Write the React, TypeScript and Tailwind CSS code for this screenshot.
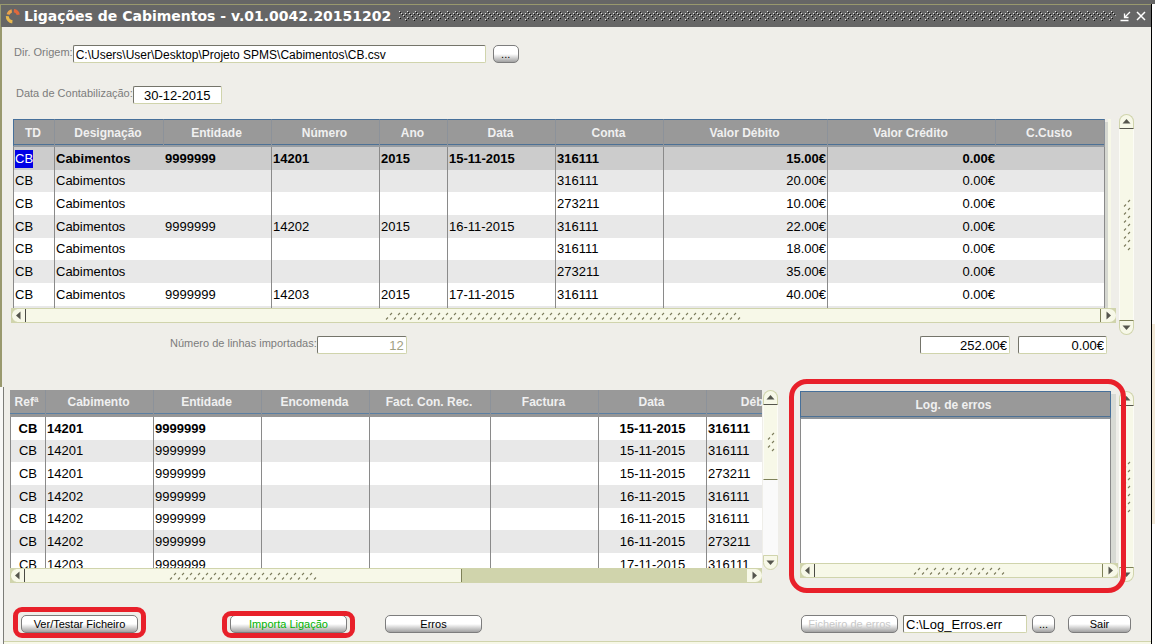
import React, { useId } from "react";
import clsx from "clsx";

type Align = "left" | "center" | "right";
interface Column {
  title: string;
  width: string;
  align: Align;
  line: boolean;
}

const alignClass: Record<Align, string> = {
  left: "text-left",
  center: "text-center",
  right: "text-right",
};

const mainColumns: Column[] = [
  { title: "TD", width: "w-[42px]", align: "left", line: true },
  { title: "Designação", width: "w-[109px]", align: "left", line: false },
  { title: "Entidade", width: "w-[108px]", align: "left", line: true },
  { title: "Número", width: "w-[108px]", align: "left", line: true },
  { title: "Ano", width: "w-[68px]", align: "left", line: true },
  { title: "Data", width: "w-[108px]", align: "left", line: true },
  { title: "Conta", width: "w-[108px]", align: "left", line: true },
  { title: "Valor Débito", width: "w-[164px]", align: "right", line: true },
  { title: "Valor Crédito", width: "w-[168px]", align: "right", line: false },
  { title: "C.Custo", width: "w-auto", align: "left", line: true },
];

const mainRows: string[][] = [
  ["CB", "Cabimentos", "9999999", "14201", "2015", "15-11-2015", "316111", "15.00€", "0.00€", ""],
  ["CB", "Cabimentos", "", "", "", "", "316111", "20.00€", "0.00€", ""],
  ["CB", "Cabimentos", "", "", "", "", "273211", "10.00€", "0.00€", ""],
  ["CB", "Cabimentos", "9999999", "14202", "2015", "16-11-2015", "316111", "22.00€", "0.00€", ""],
  ["CB", "Cabimentos", "", "", "", "", "316111", "18.00€", "0.00€", ""],
  ["CB", "Cabimentos", "", "", "", "", "273211", "35.00€", "0.00€", ""],
  ["CB", "Cabimentos", "9999999", "14203", "2015", "17-11-2015", "316111", "40.00€", "0.00€", ""],
  ["", "", "", "", "", "", "", "", "", ""],
];

const linkColumns: Column[] = [
  { title: "Refª", width: "w-[36px]", align: "center", line: true },
  { title: "Cabimento", width: "w-[108px]", align: "left", line: true },
  { title: "Entidade", width: "w-[108px]", align: "left", line: true },
  { title: "Encomenda", width: "w-[108px]", align: "left", line: true },
  { title: "Fact. Con. Rec.", width: "w-[121px]", align: "left", line: true },
  { title: "Factura", width: "w-[108px]", align: "left", line: true },
  { title: "Data", width: "w-[108px]", align: "center", line: true },
  { title: "Débito", width: "w-[108px]", align: "left", line: true },
];

const linkRows: string[][] = [
  ["CB", "14201", "9999999", "", "", "", "15-11-2015", "316111"],
  ["CB", "14201", "9999999", "", "", "", "15-11-2015", "316111"],
  ["CB", "14201", "9999999", "", "", "", "15-11-2015", "273211"],
  ["CB", "14202", "9999999", "", "", "", "16-11-2015", "316111"],
  ["CB", "14202", "9999999", "", "", "", "16-11-2015", "316111"],
  ["CB", "14202", "9999999", "", "", "", "16-11-2015", "273211"],
  ["CB", "14203", "9999999", "", "", "", "17-11-2015", "316111"],
];

function DataGrid({
  columns,
  rows,
  framed,
  className,
}: {
  columns: Column[];
  rows: string[][];
  framed: boolean;
  className: string;
}) {
  return (
    <table className={clsx("table-fixed border-separate border-spacing-0", className)}>
      <thead>
        <tr>
          {columns.map((c, i) => (
            <th
              key={c.title}
              scope="col"
              className={clsx(
                "border-r border-r-[#8c929a] bg-[#999999] py-0 pr-[2px] pl-0 text-center text-[12px] font-bold text-[#f0f0f0]",
                framed
                  ? "h-[28px] border-t border-b-2 border-t-[#47709a] border-b-[#969ca2] shadow-[inset_0_-1px_0_#4d7195]"
                  : "h-[27px] border-b-[3px] border-b-[#969696] shadow-[inset_0_-1px_0_#5a7fa3]",
                framed && i === 0 && "border-l border-l-[#47709a]",
                c.width,
              )}
            >
              {c.title}
            </th>
          ))}
        </tr>
      </thead>
      <tbody>
        {rows.map((row, r) => (
          <tr
            key={r}
            className={clsx(
              r % 3 === 1 ? "h-[22px]" : "h-[23px]",
              r % 2 === 1 ? "bg-[#e8e8e8]" : framed && r === 0 ? "bg-[#cccccc]" : "bg-white",
            )}
          >
            {row.map((value, c) => (
              <td
                key={c}
                className={clsx(
                  "overflow-hidden px-px py-0 text-[13px] leading-[18px] whitespace-nowrap",
                  columns[c].line && "border-r border-r-[#8a8a8a]",
                  c === 0 && "border-l border-l-[#8a8a8a]",
                  r === 0 && c > 0 && "font-bold",
                  r === 0 && c === 0 && !framed && "font-bold",
                  alignClass[columns[c].align],
                )}
              >
                {framed && r === 0 && c === 0 ? (
                  <span className="inline-block bg-[#0000e6] text-white">{value}</span>
                ) : (
                  value
                )}
              </td>
            ))}
          </tr>
        ))}
      </tbody>
    </table>
  );
}

/* Short diagonal marks drawn on the scroll bar thumbs. */
function Grip({ className }: { className: string }) {
  const id = useId();
  return (
    <svg className={className} aria-hidden="true">
      <defs>
        <pattern id={id} width="8" height="8" patternUnits="userSpaceOnUse">
          <path d="M1 7.5L3 5.5M5 3L7 1" stroke="#7c7c5c" strokeWidth="1.1" fill="none" />
        </pattern>
      </defs>
      <rect width="100%" height="100%" fill={`url(#${id})`} />
    </svg>
  );
}

function Arrow({ d }: { d: string }) {
  return (
    <svg viewBox="0 0 9 9" className="size-[9px]" aria-hidden="true">
      <path d={d} fill="#55554d" />
    </svg>
  );
}

function HorizontalScrollBar({
  gripWidth,
  partial = false,
}: {
  gripWidth: string;
  partial?: boolean;
}) {
  return (
    <div className="flex h-[15px] border-y border-[#d0d4ac] bg-[#d0d4ac]">
      <button
        type="button"
        aria-label="Deslocar para a esquerda"
        className="flex w-[14px] items-center justify-center rounded-l-full border-l border-[#c9cda5] bg-[#f7f8e8]"
      >
        <Arrow d="M6.5 0.5V8.5L2 4.5Z" />
      </button>
      <div
        className={clsx(
          "flex items-center justify-center border-x border-l-[#4a4a44] border-r-[#7e8158] bg-[#f7f8e8]",
          partial ? "w-[438px]" : "flex-1",
        )}
      >
        <Grip className={clsx("h-[8px]", gripWidth)} />
      </div>
      {partial && <div className="flex-1" />}
      <button
        type="button"
        aria-label="Deslocar para a direita"
        className="flex w-[15px] items-center justify-center rounded-r-full bg-[#f7f8e8]"
      >
        <Arrow d="M2.5 0.5V8.5L7 4.5Z" />
      </button>
    </div>
  );
}

function VerticalScrollBar({
  className,
  gripHeight,
  partial = false,
}: {
  className: string;
  gripHeight: string;
  partial?: boolean;
}) {
  return (
    <div className={clsx("flex w-[15px] shrink-0 flex-col", className)}>
      <button
        type="button"
        aria-label="Deslocar para cima"
        className="flex h-[15px] shrink-0 items-center justify-center rounded-t-full border border-[#d0d4ac] border-b-[#55554d] bg-[#f7f8e8]"
      >
        <Arrow d="M0.5 6.5H8.5L4.5 2Z" />
      </button>
      <div
        className={clsx(
          "flex items-center justify-center border-x border-[#fcfcf6] bg-[#f7f8e8]",
          partial ? "h-[75px] border-b border-b-[#7e8158]" : "flex-1",
        )}
      >
        <Grip className={clsx("w-[8px]", gripHeight)} />
      </div>
      {partial && <div className="flex-1 bg-[#fafafa]" />}
      <button
        type="button"
        aria-label="Deslocar para baixo"
        className={clsx(
          "flex h-[15px] shrink-0 items-center justify-center rounded-b-full border border-[#d0d4ac] bg-[#f7f8e8]",
          !partial && "border-t-[#7e8158]",
        )}
      >
        <Arrow d="M0.5 2.5H8.5L4.5 7Z" />
      </button>
    </div>
  );
}

function Field({ className, ...props }: React.ComponentProps<"input">) {
  return (
    <input
      {...props}
      className={clsx(
        "h-[18px] rounded-[2px] border border-t-[#74746a] border-r-[#d0d4ac] border-b-[#d0d4ac] border-l-[#74746a] bg-white px-[2px] pt-px leading-[15px] outline-none",
        className,
      )}
    />
  );
}

function PushButton({ className, ...props }: React.ComponentProps<"button">) {
  return (
    <button
      type="button"
      {...props}
      className={clsx(
        "h-[18px] shrink-0 rounded-[5px] border border-[#7d7d7d] bg-linear-to-b from-white from-50% to-[#a2a2a2] text-[11px] leading-[16px]",
        className,
      )}
    />
  );
}

function TitleBar() {
  return (
    <header className="flex h-[23px] items-center border-t border-l border-t-[#99996e] border-l-[#99996e] bg-[#666666] pr-[5px] pl-[4px]">
      <svg viewBox="0 0 16 16" className="size-[16px] shrink-0" aria-hidden="true">
        <path d="M1.6 6.2A6.8 6.8 0 0 1 6.6 1.2L7 4.4A4 4 0 0 0 4.6 6.8Z" fill="#eda24a" />
        <path d="M9 1.1A7 7 0 0 1 14.8 6.6L11.8 7A4 4 0 0 0 8.8 4.3Z" fill="#e0683c" />
        <path d="M0.8 8L3.8 8.2A4.4 4.4 0 0 0 7.6 12.2L7.2 15.4A7.2 7.2 0 0 1 0.8 8Z" fill="#e8b84e" />
      </svg>
      <h1 className="pl-[3px] font-['DejaVu_Sans'] text-[14px] leading-[20px] font-bold whitespace-nowrap text-white">
        Ligações de Cabimentos - v.01.0042.20151202
      </h1>
      <svg className="ml-[8px] h-[12px] flex-1" aria-hidden="true">
        <defs>
          <pattern id="bumps" width="8" height="12" patternUnits="userSpaceOnUse">
            <path d="M0 1h1v1h-1zM6 3h1v1h-1zM2 3h1v1h-1zM4 5h1v1h-1zM0 7h1v1h-1zM6 9h1v1h-1z" fill="#e4e4e4" />
            <path d="M1 2h1v1h-1zM7 4h1v1h-1zM3 4h1v1h-1zM5 6h1v1h-1zM1 8h1v1h-1zM7 10h1v1h-1z" fill="#111111" />
          </pattern>
        </defs>
        <rect width="100%" height="100%" fill="url(#bumps)" />
      </svg>
      <button type="button" aria-label="Minimizar" className="ml-[4px]">
        <svg viewBox="0 0 11 11" className="size-[11px]" aria-hidden="true">
          <path d="M0.5 9.5H8.5M10 1L4.5 6.5M4.5 2.5V6.5H8.5" stroke="#fff" strokeWidth="1.3" fill="none" />
        </svg>
      </button>
      <button type="button" aria-label="Fechar" className="ml-[5px]">
        <svg viewBox="0 0 10 10" className="size-[10px]" aria-hidden="true">
          <path d="M1 1L9 9M9 1L1 9" stroke="#fff" strokeWidth="1.5" fill="none" />
        </svg>
      </button>
    </header>
  );
}

function Highlight({ className }: { className: string }) {
  return (
    <div
      aria-hidden="true"
      className={clsx("pointer-events-none absolute border-[#e8202a]", className)}
    />
  );
}

function LogPanel() {
  return (
    <section className="relative mt-px ml-[22px] w-[318px] shrink-0">
      <div className="flex">
        <table className="flex-1 border-separate border-spacing-0">
          <thead>
            <tr>
              <th
                scope="col"
                className="h-[28px] border-x border-t border-b-2 border-x-[#47709a] border-t-[#47709a] border-b-[#8f959b] bg-[#999999] py-0 pr-[4px] pl-0 text-[12px] font-bold text-[#f0f0f0] shadow-[inset_0_-1px_0_#4d7195]"
              >
                Log. de erros
              </th>
            </tr>
          </thead>
          <tbody>
            <tr>
              <td className="h-[144px] border-x border-[#8a8a8a] bg-white p-0" />
            </tr>
          </tbody>
        </table>
        <div className="mt-[3px] mr-[2px] w-[5px] bg-[#d8dad4]" />
      </div>
      <HorizontalScrollBar gripWidth="w-[92px]" />
      <Highlight className="-top-[12px] -right-[8px] -bottom-[10px] -left-[11px] z-10 rounded-[18px] border-[5px]" />
    </section>
  );
}

export default function App() {
  return (
    <div className="flex min-h-[644px] w-full flex-col bg-white font-['Liberation_Sans',Arial,sans-serif] text-black">
      <div className="h-[4px] bg-[#666666]" />
      <div className="flex flex-1">
        <main className="flex min-w-0 flex-1 flex-col border-r border-black bg-[#efeee9]">
          <TitleBar />

          <div className="flex h-[360px] flex-col border-l-2 border-[#99996e] pt-[18px]">
            <div className="flex items-start pl-[12px]">
              <label htmlFor="origem" className="text-[11px] leading-[14px] text-[#7c7c7c]">
                Dir. Origem:
              </label>
              <Field
                id="origem"
                defaultValue={"C:\\Users\\User\\Desktop\\Projeto SPMS\\Cabimentos\\CB.csv"}
                className="w-[413px] text-[12px]"
              />
              <PushButton aria-label="Procurar ficheiro de origem" className="ml-[7px] w-[26px]">
                ...
              </PushButton>
            </div>

            <div className="mt-[23px] flex items-start pl-[14px]">
              <label htmlFor="data" className="text-[11px] leading-[14px] text-[#7c7c7c]">
                Data de Contabilização:
              </label>
              <Field id="data" defaultValue="30-12-2015" className="w-[89px] text-center text-[13px]" />
            </div>

            <section className="mt-[10px] flex pr-[17px] pl-[9px]">
              <div className="min-w-0 flex-1 pt-[5px]">
                <div className="flex h-[189px] overflow-hidden pr-[5px] pl-[2px]">
                  <DataGrid columns={mainColumns} rows={mainRows} framed className="min-w-0 flex-1" />
                  <div className="mt-[3px] w-[3px] bg-[#d5d7d0]" />
                  <div className="w-[3px] bg-[#f7f8e8]" />
                </div>
                <HorizontalScrollBar gripWidth="w-[356px]" />
              </div>
              <VerticalScrollBar className="ml-[3px] h-[221px]" gripHeight="h-[52px]" />
            </section>

            <div className="mt-px flex items-start pr-[44px] pl-[168px]">
              <label htmlFor="linhas" className="text-[11px] leading-[14px] text-[#7c7c7c]">
                Número de linhas importadas:
              </label>
              <Field
                id="linhas"
                readOnly
                value="12"
                className="w-[90px] text-right text-[13px] text-[#a0a083]"
              />
              <div className="ml-auto flex gap-[8px]">
                <Field
                  aria-label="Total débito"
                  readOnly
                  value="252.00€"
                  className="w-[90px] text-right text-[13px]"
                />
                <Field
                  aria-label="Total crédito"
                  readOnly
                  value="0.00€"
                  className="w-[89px] text-right text-[13px]"
                />
              </div>
            </div>
          </div>

          <div className="flex flex-1 border-l-[3px] border-[#f8f8f6]">
            <div className="min-w-0 flex-1 border-l border-[#7c7c78] pt-[3px]">
              <section className="flex pr-[17px] pl-[6px]">
                <div className="min-w-0 flex-1">
                  <div className="h-[178px] overflow-hidden">
                    <DataGrid columns={linkColumns} rows={linkRows} framed={false} className="w-[805px]" />
                  </div>
                  <HorizontalScrollBar gripWidth="w-[148px]" partial />
                </div>
                <VerticalScrollBar className="ml-px h-[180px]" gripHeight="h-[20px]" partial />
                <LogPanel />
                <VerticalScrollBar className="mt-px ml-px h-[191px]" gripHeight="h-[52px]" />
              </section>

              <footer className="mt-[32px] mb-[8px] flex items-center pr-[20px] pl-[17px]">
                <div className="relative flex">
                  <PushButton className="w-[117px]">Ver/Testar Ficheiro</PushButton>
                  <Highlight className="-inset-x-[8px] -top-[8px] -bottom-[5px] rounded-[9px] border-[5px]" />
                </div>
                <div className="relative ml-[92px] flex">
                  <PushButton className="w-[117px] text-[#00b400]">Importa Ligação</PushButton>
                  <Highlight className="-inset-x-[8px] -top-[4px] -bottom-[5px] rounded-[9px] border-[5px]" />
                </div>
                <PushButton className="ml-[38px] w-[97px]">Erros</PushButton>
                <div className="ml-auto flex items-center">
                  <PushButton disabled className="w-[97px] text-[#c8c8c8]">
                    Ficheiro de erros
                  </PushButton>
                  <Field
                    aria-label="Caminho do ficheiro de erros"
                    defaultValue={"C:\\Log_Erros.err"}
                    className="ml-[5px] w-[124px] text-[13px]"
                  />
                  <PushButton aria-label="Procurar ficheiro de erros" className="ml-[5px] w-[23px]">
                    ...
                  </PushButton>
                  <PushButton className="ml-[13px] w-[63px]">Sair</PushButton>
                </div>
              </footer>
              <div className="h-[3px] border-t border-[#d0d4ac] bg-[#f7f8e8]" />
            </div>
          </div>
        </main>
        <div className="flex w-[3px] flex-col">
          <div className="flex-8 bg-white" />
          <div className="flex-5 bg-[#f3ead9]" />
          <div className="flex-3 bg-white" />
        </div>
      </div>
    </div>
  );
}
